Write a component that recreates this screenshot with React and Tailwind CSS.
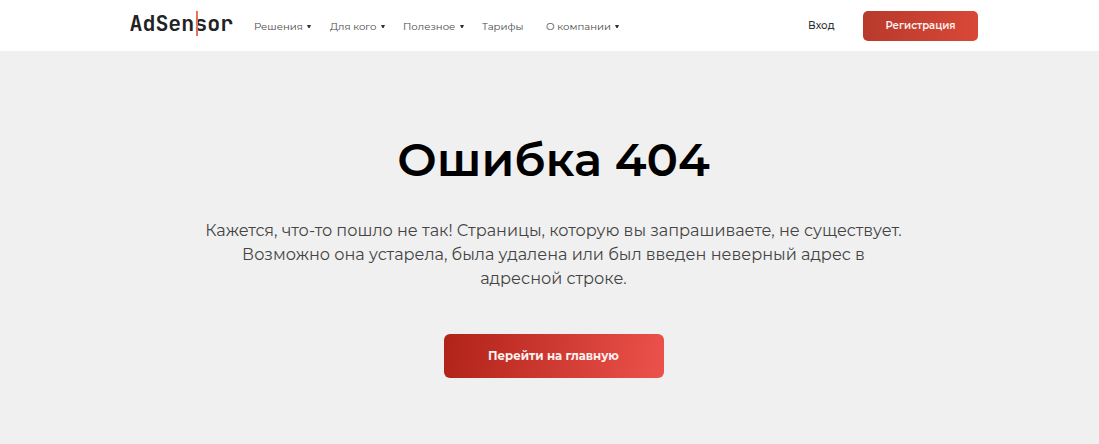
import React from "react";

const NAV_ITEMS = [
  { label: "Решения", menu: true, className: "w-[76px]" },
  { label: "Для кого", menu: true, className: "w-[73px]" },
  { label: "Полезное", menu: true, className: "w-[79px]" },
  { label: "Тарифы", menu: false, className: "w-[64px]" },
  { label: "О компании", menu: true, className: "w-[80px]" },
];

const Logo = () => (
  <a
    href="#"
    className="relative w-[104px] font-['JetBrains_Mono','DejaVu_Sans_Mono',monospace] text-[21.6px] font-bold leading-[24px] text-[#222222]"
  >
    AdSensor
    {/* red scanner line between "n" and "s" */}
    <span className="absolute left-[66.5px] top-0 h-[25px] w-[2px] bg-[#e8705f]" />
  </a>
);

const Caret = () => (
  <svg className="ml-[4.5px] h-[3px] w-[4px] shrink-0" viewBox="0 0 4 3">
    <path d="M0 0h4L2.6 3H1.4z" fill="#333333" />
  </svg>
);

const Header = () => (
  <header className="flex h-[51px] items-start bg-white pl-[129.5px]">
    <div className="flex h-[45px] items-center">
      <Logo />
    </div>
    <nav className="ml-[20.5px] flex h-[53px] w-[554px] items-center text-[10.15px] text-[#4a4a4a]">
      {NAV_ITEMS.map((item) => (
        <a key={item.label} href="#" className={`flex shrink-0 items-center whitespace-nowrap ${item.className}`}>
          {item.label}
          {item.menu && <Caret />}
        </a>
      ))}
    </nav>
    <a href="#" className="flex h-[52px] w-[55px] items-center text-[10.3px] font-medium text-[#333333]">
      Вход
    </a>
    <button className="mt-[11px] h-[30px] w-[115px] rounded-[5px] bg-linear-to-r from-[#b83a2c] to-[#d84837] text-[10.1px] font-semibold text-[#fff1ee]">
      Регистрация
    </button>
  </header>
);

const App = () => {
  return (
    <div className="min-h-screen bg-[#f0f0f0] font-['Montserrat','Inter',sans-serif]">
      <Header />
      <main className="flex flex-col items-center pl-2 text-center">
        <h1 className="mt-[79px] whitespace-nowrap text-[46.8px] font-semibold leading-[60px] text-black">
          Ошибка 404
        </h1>
        <div className="mt-[28px] whitespace-nowrap text-[16.1px] leading-[24px] text-[#444444]">
          <p>Кажется, что-то пошло не так! Страницы, которую вы запрашиваете, не существует.</p>
          <p>Возможно она устарела, была удалена или был введен неверный адрес в</p>
          <p>адресной строке.</p>
        </div>
        <button className="mt-[44px] h-[44px] w-[220px] rounded-[6px] bg-linear-[100deg] from-[#b02218] to-[#ec524b] pt-[2px] text-[11.7px] font-bold text-[#fff1ee]">
          Перейти на главную
        </button>
      </main>
    </div>
  );
};

export default App;
